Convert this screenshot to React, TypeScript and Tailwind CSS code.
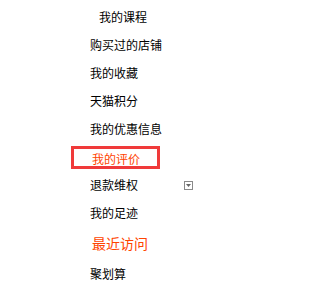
const items = ["购买过的店铺", "我的收藏", "天猫积分", "我的优惠信息"];

export default function App() {
  return (
    <div
      className="w-[210px] h-[293px] bg-white text-[12px] text-black pt-[3px]"
      style={{ fontFamily: '"Noto Sans CJK SC", "Noto Sans", sans-serif' }}
    >
      <div className="h-[28px] leading-[28px] pl-[99px]">我的课程</div>
      {items.map((item) => (
        <div key={item} className="h-[28px] leading-[28px] pl-[90px]">
          {item}
        </div>
      ))}
      {/* selected item with red outline */}
      <div className="h-[28px] pt-[2.5px]">
        <div className="ml-[71px] w-[89px] h-[23px] border-[3px] border-[#f03a3a] pl-[18px] pt-[1px] text-[#ff4400] leading-[17px] overflow-hidden">
          我的评价
        </div>
      </div>
      <div className="h-[28px] flex items-center pl-[90px] pr-[17px]">
        <span>退款维权</span>
        <span className="ml-auto w-[9px] h-[9px] border border-[#8a8a8a] flex items-center justify-center">
          <svg width="5" height="3" viewBox="0 0 5 3">
            <path d="M0 0H5L2.5 3Z" fill="#666" />
          </svg>
        </span>
      </div>
      <div className="h-[28px] leading-[28px] pl-[90px]">我的足迹</div>
      <div className="h-[33px] flex items-center pl-[92px] text-[14px] text-[#ff4400]">
        最近访问
      </div>
      <div className="h-[28px] leading-[28px] pl-[90px]">聚划算</div>
    </div>
  );
}
